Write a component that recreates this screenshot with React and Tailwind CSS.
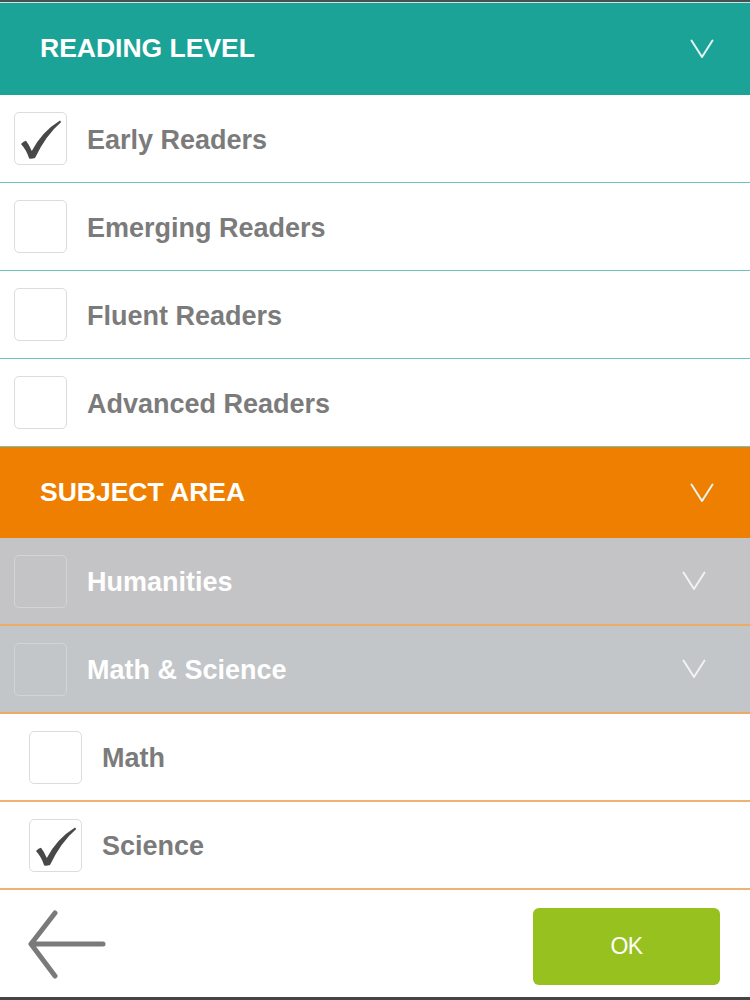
import React, { useState } from 'react';

const font = { fontFamily: '"Liberation Sans", Arial, sans-serif' };

function Chevron({ className = '' }) {
  return (
    <svg width="24" height="20" viewBox="0 0 24 20" className={className}>
      <path d="M1.5 1.5 L12 18 L22.5 1.5" fill="none" stroke="currentColor" strokeWidth="2" strokeLinecap="round" strokeLinejoin="round" />
    </svg>
  );
}

function Tick() {
  return (
    <svg width="53" height="53" viewBox="0 0 53 53" className="absolute inset-0">
      <path
        d="M6 31 Q8.5 28 11 27.8 Q14 31.5 16.8 38 Q27 18.5 45 7.5 L46.2 9 Q31 22 20 45 Q17 46 14.2 45.6 Q11.5 37 6 31 Z"
        fill="#484848"
      />
    </svg>
  );
}

function Box({ checked, muted }) {
  return (
    <div
      className={
        'relative w-[53px] h-[53px] shrink-0 rounded-[5px] border ' +
        (muted ? 'border-[#d3d4d6] bg-transparent' : 'border-[#dcdcdc] bg-white')
      }
    >
      {checked && <Tick />}
    </div>
  );
}

function Header({ title, bg }) {
  return (
    <div className={`h-full flex items-center justify-between pl-[40px] pr-[36px] ${bg}`}>
      <span className="text-[26.5px] font-bold text-white">{title}</span>
      <Chevron className="text-[#e6f4f2]" />
    </div>
  );
}

function Row({ label, checked, onToggle, border, indent }) {
  return (
    <div
      onClick={onToggle}
      className={`h-[88px] flex items-center bg-white ${border} ${indent ? 'pl-[29px]' : 'pl-[14px]'}`}
    >
      <Box checked={checked} />
      <span className="ml-[20px] pt-[3px] text-[27px] font-bold text-[#7b7b7b]">{label}</span>
    </div>
  );
}

function GroupRow({ label, bg }) {
  return (
    <div className={`h-[88px] flex items-center pl-[14px] pr-[44px] border-b-2 border-[#eeab66] ${bg}`}>
      <Box muted />
      <span className="ml-[20px] pt-[3px] text-[27px] font-bold text-white flex-1">{label}</span>
      <Chevron className="text-[#f2f2f2]" />
    </div>
  );
}

export default function App() {
  const [levels, setLevels] = useState({
    'Early Readers': true,
    'Emerging Readers': false,
    'Fluent Readers': false,
    'Advanced Readers': false,
  });
  const [subjects, setSubjects] = useState({ Math: false, Science: true });

  return (
    <div style={font} className="w-[750px] h-[1000px] flex flex-col bg-white overflow-hidden">
      <div className="h-[2px] bg-[#4a4f52]" />
      <div className="h-[1px] bg-[#c9e6e4]" />
      <div className="h-[92px]">
        <Header title="READING LEVEL" bg="bg-[#1ca398]" />
      </div>

      {Object.keys(levels).map((k) => (
        <Row
          key={k}
          label={k}
          checked={levels[k]}
          border="border-b border-[#6ec3bd]"
          onToggle={() => setLevels((s) => ({ ...s, [k]: !s[k] }))}
        />
      ))}

      <div className="h-[91px]">
        <Header title="SUBJECT AREA" bg="bg-[#ef7f00]" />
      </div>

      <GroupRow label="Humanities" bg="bg-[#c4c4c6]" />
      <GroupRow label="Math & Science" bg="bg-[#c2c6c8]" />

      {Object.keys(subjects).map((k) => (
        <Row
          key={k}
          label={k}
          indent
          checked={subjects[k]}
          border="border-b-2 border-[#f0b272]"
          onToggle={() => setSubjects((s) => ({ ...s, [k]: !s[k] }))}
        />
      ))}

      <div className="flex-1 flex items-center justify-between pl-[28px] pr-[30px] border-b-[3px] border-[#454545]">
        <button type="button" className="mt-[3px]">
          <svg width="80" height="70" viewBox="0 0 80 70">
            <path
              d="M27 3 L3 34 L27 66 M3 34 L75 34"
              fill="none"
              stroke="#7a7a7a"
              strokeWidth="5"
              strokeLinecap="round"
              strokeLinejoin="round"
            />
          </svg>
        </button>
        <button
          type="button"
          className="mt-[5px] w-[187px] h-[77px] rounded-[6px] bg-[#97c11f] text-white text-[23px] tracking-[-0.5px]"
        >
          OK
        </button>
      </div>
    </div>
  );
}
